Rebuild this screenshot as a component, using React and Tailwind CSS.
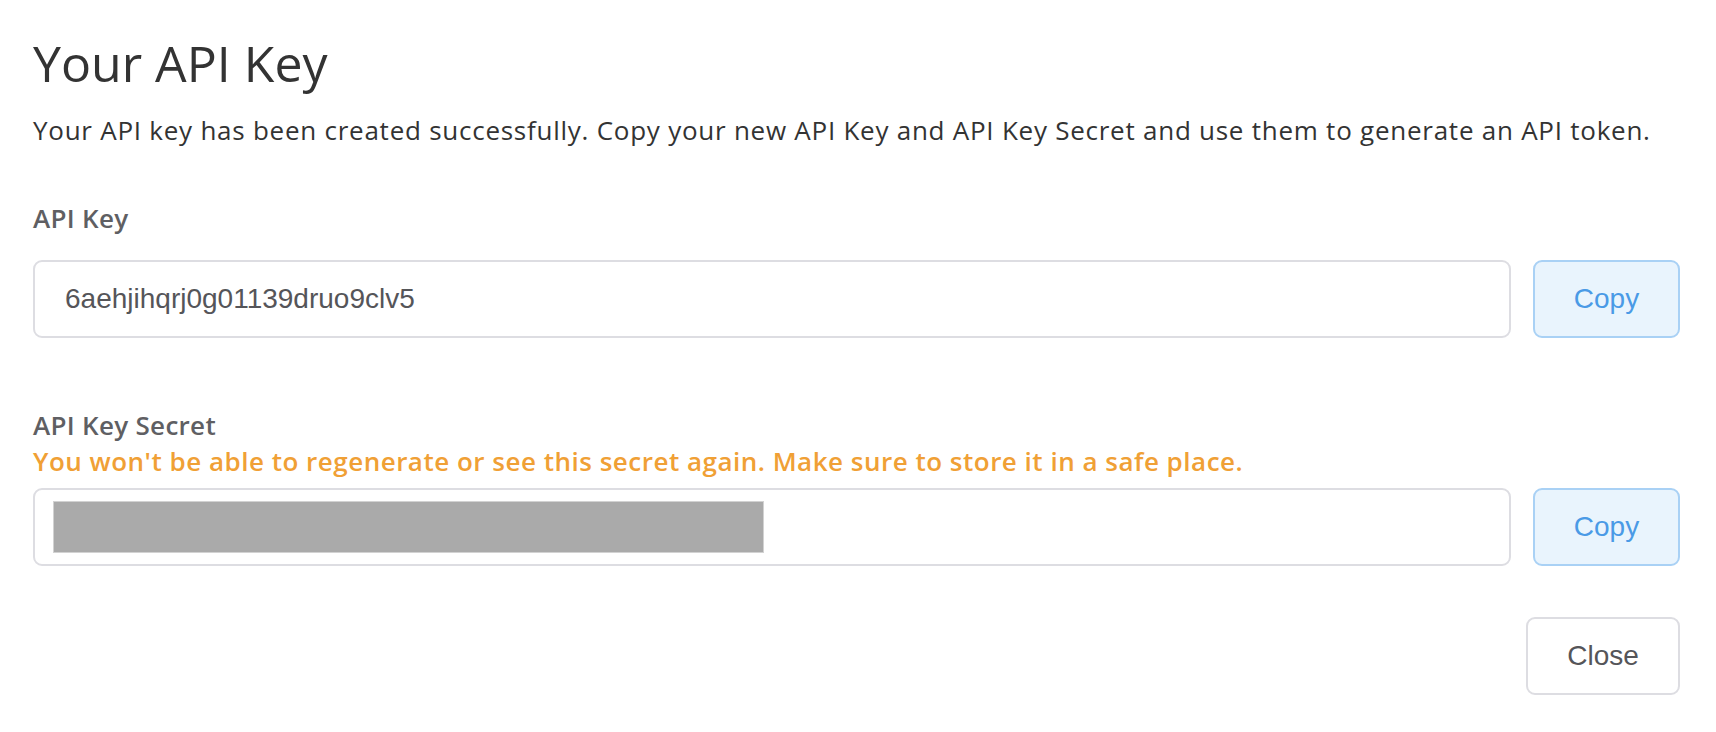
import React from 'react';

function KeyField({ children, padded }) {
  return (
    <div className="flex gap-[22px]">
      <div className={`flex-1 h-[78px] border-2 border-[#dddde2] rounded-[9px] flex items-center ${padded ? 'pl-[18px]' : 'pl-[30px]'} font-['Liberation_Sans',Arial,sans-serif] text-[28px] text-[#555559]`}>
        {children}
      </div>
      <button className="w-[147px] h-[78px] rounded-[9px] border-2 border-[#a9d1f5] bg-[#e9f4fd] text-[#4a9ae6] text-[28px] font-['Liberation_Sans',Arial,sans-serif]">
        Copy
      </button>
    </div>
  );
}

export default function App() {
  return (
    <div className="min-h-screen w-full bg-white pl-[33px] pr-[36px] pt-[33px] font-['Open_Sans',sans-serif]">
      <h1 className="text-[50px] leading-[60px] text-[#333333]">Your API Key</h1>
      <p className="mt-[19px] text-[26px] leading-[36px] tracking-[0.75px] text-[#333333]">
        Your API key has been created successfully. Copy your new API Key and API Key Secret and use them to generate an API token.
      </p>

      <div className="mt-[52px] text-[26px] leading-[36px] font-semibold tracking-[0.3px] text-[#5f5f63]">API Key</div>
      <div className="mt-[24px]">
        <KeyField>6aehjihqrj0g01139druo9clv5</KeyField>
      </div>

      <div className="mt-[69px] text-[26px] leading-[36px] font-semibold tracking-[0.3px] text-[#5f5f63]">API Key Secret</div>
      <div className="text-[26px] leading-[36px] font-semibold tracking-[0.5px] text-[#f0a035]">
        You won't be able to regenerate or see this secret again. Make sure to store it in a safe place.
      </div>
      <div className="mt-[9px]">
        <KeyField padded>
          <div className="w-[711px] h-[52px] bg-[#aaaaaa] border border-[#d2d2d2]" />
        </KeyField>
      </div>

      <div className="mt-[51px] flex justify-end">
        <button className="w-[154px] h-[78px] rounded-[9px] border-2 border-[#dddde2] bg-white text-[#555559] text-[28px] font-['Liberation_Sans',Arial,sans-serif]">
          Close
        </button>
      </div>
    </div>
  );
}
